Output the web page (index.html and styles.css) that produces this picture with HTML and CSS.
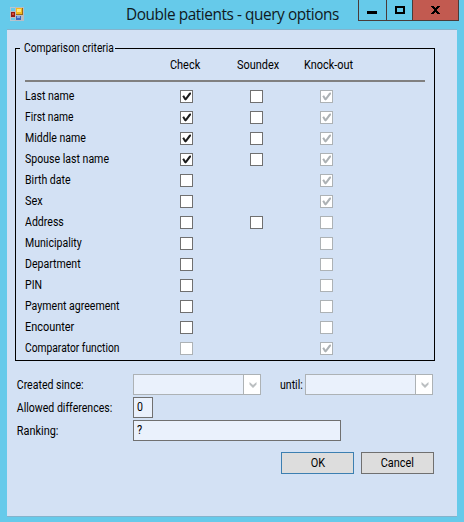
FILE: index.html
```
<!DOCTYPE html>
<html lang="en">
<head>
<meta charset="utf-8">
<title>Double patients - query options</title>
<link rel="stylesheet" href="styles.css">
</head>
<body>
<svg class="defs" aria-hidden="true"><symbol id="tick" viewBox="0 0 11 11"><path d="M1.300 5.300 3 4.300l1.600 2.400L8.200 1.800 10 1.500v1.600L5.800 8.500 4.600 9.500 3.400 8.700Z"/></symbol><symbol id="arrow" viewBox="0 0 8 6"><path d="M.5 0 4 3 7.500 0V2.500L4 6 .5 2.500Z"/></symbol></svg>
<div class="window">
<header class="titlebar">
<svg class="appicon" viewBox="0 0 14 14"><path fill="#b9bdc5" d="M5 0h9v14H5v-3H0V4h5Z"/><path fill="#b9c6cf" d="M0 0h5v1H1v4H0ZM0 10h1v3h4v1H0Z"/><path fill="#9d6b14" d="M6 1h7v7H6Z"/><path fill="#f5b91e" d="M6 1h6v6H6Z"/><path fill="#ffe47c" d="M7 2h4v3H7Z"/><path fill="#951c13" d="M1 5h4v5H1Z"/><path fill="#d94b35" d="M2 6h2v2H2Z"/><path fill="#3d67bb" d="M6 9h5v4H6Z"/><path fill="#81a9e8" d="M7 9h3v2H7Z"/></svg>
<h1>Double patients - query options</h1>
<div class="controls">
<span class="ctl"><svg width="10" height="8"><path d="M0 5h10v3H0Z"/></svg></span>
<span class="ctl max"><svg width="10" height="8"><path fill-rule="evenodd" d="M0 0h10v8H0ZM2 2v4h6V2Z"/></svg></span>
<span class="ctl close"><svg width="9" height="8" shape-rendering="crispEdges"><path d="M0 0h3v1h1v1h1V1h1V0h3v1H8v1H7v1H6v2h1v1h1v1h1v1H6V7H5V6H4v1H3v1H0V7h1V6h1V5h1V3H2V2H1V1H0Z"/></svg></span>
</div>
</header>
<main class="client">
<section class="group">
<div class="legend"><i></i><b class="t narrow">Comparison criteria</b><i class="grow"></i></div>
<div class="box">
<div class="heads"><span></span><span class="t wide">Check</span><span class="t wide">Soundex</span><span class="t wide">Knock-out</span></div>
<div class="rows">
<div class="row"><span class="t">Last name</span><u><svg><use href="#tick"/></svg></u><u></u><u class="off"><svg><use href="#tick"/></svg></u></div>
<div class="row"><span class="t narrow">First name</span><u><svg><use href="#tick"/></svg></u><u></u><u class="off"><svg><use href="#tick"/></svg></u></div>
<div class="row"><span class="t">Middle name</span><u><svg><use href="#tick"/></svg></u><u></u><u class="off"><svg><use href="#tick"/></svg></u></div>
<div class="row"><span class="t">Spouse last name</span><u><svg><use href="#tick"/></svg></u><u></u><u class="off"><svg><use href="#tick"/></svg></u></div>
<div class="row"><span class="t">Birth date</span><u></u><s></s><u class="off"><svg><use href="#tick"/></svg></u></div>
<div class="row"><span class="t wide">Sex</span><u></u><s></s><u class="off"><svg><use href="#tick"/></svg></u></div>
<div class="row"><span class="t">Address</span><u></u><u></u><u class="off"></u></div>
<div class="row"><span class="t">Municipality</span><u></u><s></s><u class="off"></u></div>
<div class="row"><span class="t">Department</span><u></u><s></s><u class="off"></u></div>
<div class="row"><span class="t">PIN</span><u></u><s></s><u class="off"></u></div>
<div class="row"><span class="t">Payment agreement</span><u></u><s></s><u class="off"></u></div>
<div class="row"><span class="t wide">Encounter</span><u></u><s></s><u class="off"></u></div>
<div class="row"><span class="t narrow">Comparator function</span><u class="off"></u><s></s><u class="off"><svg><use href="#tick"/></svg></u></div>
</div>
</div>
</section>
<div class="fields">
<div class="field"><span class="t name">Created since:</span><div class="combo"><em><svg><use href="#arrow"/></svg></em></div><span class="t until">until:</span><div class="combo"><em><svg><use href="#arrow"/></svg></em></div></div>
<div class="field"><span class="t name">Allowed differences:</span><div class="input small"><span class="t">0</span></div></div>
<div class="field"><span class="t name wide">Ranking:</span><div class="input"><span class="t wide">?</span></div></div>
</div>
<div class="actions"><div class="button ok"><span class="t wide">OK</span></div><div class="button"><span class="t wide">Cancel</span></div></div>
</main>
</div>
</body>
</html>
```
FILE: styles.css
```
* { box-sizing: border-box; }
body { margin: 0; font: 12px/15px Roboto, "Liberation Sans", sans-serif; color: #000; }
.defs { display: none; }
svg { display: block; }
.window { width: 464px; height: 522px; background: #66caea; padding: 0 7px; }
.titlebar { height: 29px; display: flex; align-items: flex-start; }
.appicon { width: 14px; height: 14px; margin: 7px 0 0 3px; flex: none; }
h1 { margin: 4px 0 0 102px; width: 232px; flex: none; font: 15.4px/22px "Open Sans", sans-serif; letter-spacing: -0.44px; white-space: nowrap; color: #10191d; }
.controls { display: flex; flex: none; width: 101px; height: 21px; border: 1px solid #4a3b39; border-top: 0; }
.ctl { width: 28px; padding: 6px 0 0 8px; border-right: 1px solid #4a3b39; }
.max { width: 26px; }
.close { width: 45px; padding-left: 18px; background: #c25a50; border: 0; }
.client { height: 488px; background: #d3e1f4; border: solid #84b3cc; border-width: 1px 0; padding: 11px 0 0 8px; width: 450px; }
.t { display: block; white-space: nowrap; transform: scaleX(.88); transform-origin: left; font-weight: 400; }
.t.narrow { transform: scaleX(.855); }
.t.wide { transform: scaleX(.91); }
.group { width: 420px; }
.legend { height: 15px; display: flex; align-items: center; }
.legend i { width: 5px; height: 1px; background: #000; }
.legend b { width: 91px; margin-left: 4px; }
.legend .grow { flex: 1; }
.box { height: 312px; margin-top: -7px; border: 1px solid #000; border-top: 0; padding: 9px 9px 0; }
.heads { height: 24px; border-bottom: 2px solid #808080; display: grid; grid-template-columns: 145px 67px 67px 1fr; }
.row { height: 21px; display: grid; grid-template-columns: 155px 70px 70px 1fr; align-items: center; }
.rows { padding-top: 4px; }
u { width: 13px; height: 13px; background: #fff; border: 1px solid #707070; color: #1c1c1c; }
u svg { width: 11px; height: 11px; fill: currentColor; }
.off { border-color: #adb2b5; color: #adb2b5; }
.fields { margin-top: 13px; display: grid; gap: 2px; }
.field { height: 21px; display: flex; align-items: center; }
.name { width: 116px; padding: 2px 0 0 2px; margin-right: 2px; }
.combo { width: 128px; height: 21px; border: 1px solid #adb2b5; background: #eaf1fc; display: flex; justify-content: flex-end; }
.combo em { width: 17px; background: #fff; border-left: 1px solid #adb2b5; padding: 7px 0 0 5px; }
.combo svg { width: 8px; height: 6px; fill: #bbbfc1; }
.until { width: 25px; margin-left: 19px; padding-top: 2px; }
.input { width: 208px; height: 21px; border: 1px solid #707070; background: #eaf1fc; padding: 2px 3px; }
.small { width: 20px; }
.actions { display: flex; gap: 7px; margin: 11px 0 0 266px; }
.button { width: 73px; height: 22px; border: 1px solid #707070; background: #ddd; display: flex; align-items: center; justify-content: center; }
.button .t { transform-origin: center; }
.ok { border-color: #3c7fb1; }
```
